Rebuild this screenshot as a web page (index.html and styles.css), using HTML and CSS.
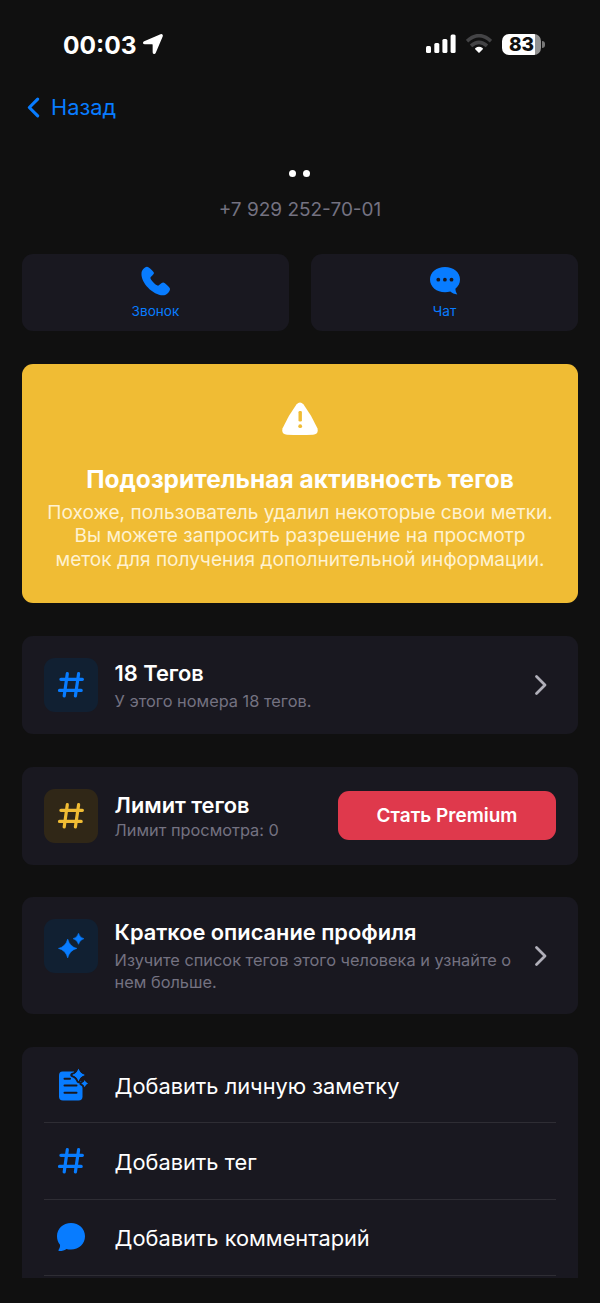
FILE: index.html
```html
<!DOCTYPE html>
<html lang="ru">
<head>
<meta charset="utf-8">
<title>Контакт</title>
<link rel="stylesheet" href="styles.css">
</head>
<body>
<svg class="defs" width="0" height="0">
  <symbol id="hash" viewBox="0 0 28 28"><path d="M10.3 2.7 7.200 25M21.600 2.700 18.400 25M3.900 8.300H25.400M2.500 19.400H24.200" fill="none" stroke="currentColor" stroke-width="3.200" stroke-linecap="round"/></symbol>
  <symbol id="chevron" viewBox="0 0 14 22"><path d="M2.500 2.500 11 11 2.500 19.500" fill="none" stroke="currentColor" stroke-width="2.800" stroke-linecap="round" stroke-linejoin="round"/></symbol>
</svg>
<div class="screen">
  <header class="status">
    <div class="status-left">
      <span class="time">00:03</span>
      <svg class="location" viewBox="0 0 22 22"><path d="M18.800 2 2.500 9C1.300 9.600 1.600 10.600 2.800 10.600H10.300C11.100 10.600 11.400 11 11.400 11.700V19.200C11.400 20.400 12.600 20.600 13.100 19.400L20 3.200C20.300 2.200 19.800 1.600 18.800 2Z" fill="#fff" stroke="#fff" stroke-width="1.500" stroke-linejoin="round"/></svg>
    </div>
    <div class="status-right">
      <svg class="signal" viewBox="0 0 30 20"><g fill="#fff"><rect x="0" y="12" width="5" height="7" rx="1.500"/><rect x="8.300" y="9" width="5" height="10" rx="1.500"/><rect x="16.400" y="5" width="5" height="14" rx="1.500"/><rect x="24.600" y="0.500" width="5" height="18.500" rx="1.500"/></g></svg>
      <svg class="wifi" viewBox="0 0 26 20"><g fill="none" stroke="#444446" stroke-width="3.600"><path d="M1 7.200Q13-3.800 25 7.200"/><path d="M5 11.800Q13 4.800 21 11.800"/></g><path d="M13 19 9.200 15.200Q8.800 14.600 9.500 14.100Q13 11.500 16.500 14.100Q17.200 14.600 16.800 15.200Z" fill="#fff"/></svg>
      <div class="battery"><span class="battery-body">83</span><span class="battery-cap"></span></div>
    </div>
  </header>

  <nav class="nav">
    <svg class="back-icon" viewBox="0 0 14 22"><path d="M11 3 3 11l8 8" fill="none" stroke="currentColor" stroke-width="3" stroke-linecap="round" stroke-linejoin="round"/></svg>
    <span>Назад</span>
  </nav>

  <section class="profile">
    <div class="dots"><i></i><i></i></div>
    <div class="phone">+7 929 252-70-01</div>
  </section>

  <section class="actions">
    <div class="card action">
      <svg class="action-icon" viewBox="0 0 32 32"><path d="M1.500 8C1.600 5.500 4.300 2 7 1.800C8.800 1.800 13.400 6.300 13.900 7.800C14.400 9.500 10.400 11.700 10.400 13C10.600 15.200 15.900 20.400 18 20.700C19.400 20.800 21.400 17.400 23.200 17.600C24.900 17.900 29.900 22.200 30 24C30 26.500 26.800 29.800 24.200 30.200C14.500 31.500 .5 18.400 1.500 8Z" fill="currentColor"/></svg>
      <span>Звонок</span>
    </div>
    <div class="card action">
      <svg class="action-icon" viewBox="0 0 32 32"><path d="M16 2C24.400 2 31 7.200 31 14.500C31 18.300 29.200 21.500 26.400 23.700C26.500 26 27.100 27.600 28.300 29.400C25.300 29.200 23 28.100 21.300 26.500C19.600 27 17.800 27.300 16 27.300C7.600 27.300 1 22 1 14.600C1 7.200 7.600 2 16 2Z" fill="currentColor"/><g fill="#191820"><circle cx="9.300" cy="14.700" r="1.900"/><circle cx="15.900" cy="14.700" r="1.900"/><circle cx="22.500" cy="14.700" r="1.900"/></g></svg>
      <span>Чат</span>
    </div>
  </section>

  <section class="warning">
    <svg class="warning-icon" viewBox="0 0 36 34"><path d="M14.400 2.500Q18-1.600 21.600 2.500Q30 14 35.400 26.200Q37 32.400 31 32.800Q18 33.200 5 32.800Q-1 32.400 .6 26.200Q6 14 14.400 2.500Z" fill="#fff"/><rect x="16.500" y="9" width="3.400" height="10.500" rx="1.300" fill="#f0bc34"/><circle cx="18.200" cy="24.200" r="1.900" fill="#f0bc34"/></svg>
    <h2>Подозрительная активность тегов</h2>
    <p>Похоже, пользователь удалил некоторые свои метки.<br>Вы можете запросить разрешение на просмотр<br>меток для получения дополнительной информации.</p>
  </section>

  <section class="card row tags">
    <div class="tile blue"><svg class="glyph"><use href="#hash"/></svg></div>
    <div class="copy"><h3>18 Тегов</h3><p>У этого номера 18 тегов.</p></div>
    <svg class="chevron"><use href="#chevron"/></svg>
  </section>

  <section class="card row limit">
    <div class="tile yellow"><svg class="glyph"><use href="#hash"/></svg></div>
    <div class="copy"><h3>Лимит тегов</h3><p>Лимит просмотра: 0</p></div>
    <button class="premium">Стать Premium</button>
  </section>

  <section class="card row summary">
    <div class="tile blue"><svg class="glyph" viewBox="0 0 28 28"><path d="M10.700 7Q12.900 14.800 20 16.400Q12.900 18 10.700 26Q8.500 18 1.400 16.400Q8.500 14.800 10.700 7ZM21.500 1.200Q22.800 5.700 27 6.700Q22.800 7.800 21.500 12.300Q20.200 7.800 16 6.700Q20.200 5.700 21.500 1.200Z" fill="currentColor" stroke="currentColor" stroke-width=".5" stroke-linejoin="round"/></svg></div>
    <div class="copy"><h3>Краткое описание профиля</h3><p>Изучите список тегов этого человека и узнайте о<br>нем больше.</p></div>
    <svg class="chevron"><use href="#chevron"/></svg>
  </section>

  <section class="card menu">
    <div class="item">
      <svg class="item-icon" viewBox="0 0 34 34"><path d="M8.500 3.500H20L28.500 15V28.500Q28.500 32.500 24.500 32.500H9Q5 32.500 5 28.500V7.500Q5 3.500 8.500 3.500Z" fill="currentColor"/><path d="M10.500 10.700H16M10.500 17.500H22.500M10.500 24.700H22.500" stroke="#191820" stroke-width="2" stroke-linecap="round"/><path d="M24.500 .8Q26 5.600 30.700 7Q26 8.400 24.500 13.200Q23 8.400 18.300 7Q23 5.600 24.500 .8ZM30.700 12.300Q31.400 14.900 33.800 15.600Q31.400 16.300 30.700 18.900Q30 16.300 27.400 15.600Q30 14.900 30.700 12.300Z" fill="currentColor" stroke="#191820" stroke-width="4" stroke-linejoin="round" paint-order="stroke"/><path d="M24.500 .8Q26 5.600 30.700 7Q26 8.400 24.500 13.200Q23 8.400 18.300 7Q23 5.600 24.500 .8ZM30.700 12.300Q31.400 14.900 33.800 15.600Q31.400 16.300 30.700 18.900Q30 16.300 27.400 15.600Q30 14.900 30.700 12.300Z" fill="currentColor"/></svg>
      <span>Добавить личную заметку</span>
    </div>
    <div class="item"><svg class="item-icon hash"><use href="#hash"/></svg><span>Добавить тег</span></div>
    <div class="item">
      <svg class="item-icon" viewBox="0 0 34 34"><path d="M17 3C25 3 31 8.900 31 16.300S25 29.600 17 29.600C15.300 29.600 13.800 29.400 12.400 28.900C10.400 30.300 7.900 31.100 5.400 31C4.400 31 4.200 30 4.800 29.400C5.800 28.100 6.200 26.700 6 24.800C4.200 22.500 3 19.600 3 16.300C3 8.900 9 3 17 3Z" fill="currentColor"/></svg>
      <span>Добавить комментарий</span>
    </div>
  </section>
</div>
</body>
</html>
```

FILE: styles.css
```css
* { box-sizing: border-box; }
body { margin: 0; background: #101010; color: #fff; font-family: Inter, "Noto Sans", sans-serif; }
h2, h3, p { margin: 0; }
svg { display: block; flex: none; }
.defs { position: absolute; }
.screen { width: 600px; height: 1303px; padding: 0 22px; overflow: hidden; display: flex; flex-direction: column; white-space: nowrap; }
.card { background: #191820; border-radius: 11px; }

.status { height: 88px; padding: 0 33px 0 41px; display: flex; align-items: center; justify-content: space-between; }
.status-left, .status-right { display: flex; align-items: center; }
.time { font-size: 24.5px; font-weight: 700; line-height: 30px; padding-top: 2px; }
.location { width: 22px; height: 22px; margin-left: 5px; }
.signal { width: 30px; height: 20px; }
.wifi { width: 26px; height: 20px; margin: 0 10px 0 10px; }
.battery { display: flex; align-items: center; gap: 1px; }
.battery-body { width: 39px; height: 21px; border-radius: 7px; background: linear-gradient(90deg, #fff 0 33px, #929292 33px); color: #101010; font-size: 19px; font-weight: 800; line-height: 21px; text-align: center; }
.battery-cap { width: 3px; height: 7px; border-radius: 0 4px 4px 0; background: #777; }

.nav { height: 38px; padding-left: 4px; display: flex; align-items: center; gap: 10px; color: #087cff; font-size: 21.8px; }
.back-icon { width: 15px; height: 23px; }

.profile { height: 128px; display: flex; flex-direction: column; align-items: center; }
.dots { display: flex; gap: 7px; padding: 44px 1px 0 0; }
.dots i { width: 7px; height: 7px; border-radius: 50%; background: #fff; }
.phone { margin-top: 21px; font-size: 19px; line-height: 24px; color: #747281; }

.actions { display: grid; grid-template-columns: 1fr 1fr; gap: 22px; }
.action { height: 77px; padding-top: 11px; display: flex; flex-direction: column; align-items: center; gap: 5px; color: #087cff; font-size: 13.6px; line-height: 18px; }
.action-icon { width: 32px; height: 32px; }

.warning { margin-top: 33px; height: 239px; padding-top: 38px; border-radius: 11px; background: #f0bc34; display: flex; flex-direction: column; align-items: center; text-align: center; }
.warning-icon { width: 36px; height: 34px; }
.warning h2 { margin-top: 27px; font-size: 24.5px; font-weight: 700; line-height: 32px; }
.warning p { margin-top: 6px; font-size: 19.08px; line-height: 23.3px; color: #fff2d0; }

.row { margin-top: 33px; height: 98px; padding: 0 22px; display: flex; align-items: center; }
.tile { width: 54px; height: 54px; border-radius: 11px; display: grid; place-items: center; margin-right: 16.6px; flex: none; }
.blue { background: #112032; color: #087cff; }
.yellow { background: #302717; color: #f0bc34; }
.glyph { width: 28px; height: 28px; }
.copy { flex: 1; }
.copy h3 { font-size: 21.8px; font-weight: 600; line-height: 28px; }
.copy p { font-size: 16.35px; line-height: 22px; color: #747281; }
.tags .copy p { margin-top: 3px; }
.tags .copy { padding-top: 1px; }
.chevron { width: 14px; height: 22px; color: #b0afb9; margin-right: 8px; }
.premium { width: 218px; height: 49px; border: 0; padding: 0; margin-bottom: 2px; border-radius: 11px; background: #df394c; color: #fff; font: 600 19px Inter, "Noto Sans", sans-serif; }
.summary { height: 117px; margin-top: 32px; }
.summary .tile { align-self: flex-start; margin-top: 22px; }
.summary .copy p { margin-top: 3px; }

.menu { margin-top: 33px; height: 231px; padding: 0 22px; border-radius: 11px 11px 0 0; }
.item { height: 76.3px; border-bottom: 1px solid #2e2d34; display: flex; align-items: center; font-size: 21.8px; }
.item span { padding-top: 2px; }
.item-icon { width: 34px; height: 34px; color: #087cff; margin: 0 26.6px 0 10px; }
.item-icon.hash { width: 28px; height: 28px; margin: 1px 29.6px 0 13px; }
```
